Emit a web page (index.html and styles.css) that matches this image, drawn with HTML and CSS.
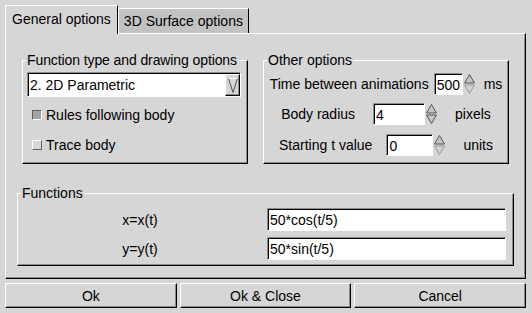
FILE: index.html
```html
<!DOCTYPE html>
<html lang="en">

<head>
    <meta charset="UTF-8">
    <meta name="viewport" content="width=device-width, initial-scale=1.0">
    <title>Options</title>
    <link rel="stylesheet" href="styles.css">
</head>

<body>
    <div class="dialog">
        <!-- Tabs -->
        <div class="tabs">
            <div class="tab tab-active">General options</div>
            <div class="tab">3D Surface options</div>
        </div>

        <!-- Page -->
        <div class="pane">
            <div class="top-row">
                <fieldset class="group group-type">
                    <legend>Function type and drawing options</legend>
                    <div class="combo">
                        <div class="combo-text">2. 2D Parametric</div>
                        <div class="combo-button">
                            <svg width="10" height="17" viewBox="0 0 10 17">
                                <polyline points="0.5,1.5 5,15.5 9.5,1.5" fill="none" stroke="#505050" />
                                <line x1="0.5" y1="1.5" x2="9.5" y2="1.5" stroke="#ffffff" />
                            </svg>
                        </div>
                    </div>
                    <label class="check"><span class="check-box checked"></span>Rules following body</label>
                    <label class="check"><span class="check-box"></span>Trace body</label>
                </fieldset>

                <fieldset class="group group-other">
                    <legend>Other options</legend>
                    <div class="spin-row row-time">
                        <span>Time between animations</span>
                        <span class="spin">
                            <input class="field spin-time" type="text" value="500">
                            <svg class="arrows" width="13" height="22" viewBox="0 0 13 22">
                                <polygon points="6.5,1.5 11.5,10 1.5,10" fill="#c4c4c4" stroke="#555" />
                                <polygon points="1.5,12 11.5,12 6.5,20.5" fill="#d0d0d0" stroke="#9a9a9a" />
                            </svg>
                        </span>
                        <span>ms</span>
                    </div>
                    <div class="spin-row row-radius">
                        <span>Body radius</span>
                        <span class="spin">
                            <input class="field spin-radius" type="text" value="4">
                            <svg class="arrows" width="13" height="22" viewBox="0 0 13 22">
                                <polygon points="6.5,1.5 11.5,10 1.5,10" fill="#c4c4c4" stroke="#555" />
                                <polygon points="1.5,12 11.5,12 6.5,20.5" fill="#c4c4c4" stroke="#555" />
                            </svg>
                        </span>
                        <span>pixels</span>
                    </div>
                    <div class="spin-row row-start">
                        <span>Starting t value</span>
                        <span class="spin">
                            <input class="field spin-start" type="text" value="0">
                            <svg class="arrows" width="13" height="22" viewBox="0 0 13 22">
                                <polygon points="6.5,1.5 11.5,10 1.5,10" fill="#c4c4c4" stroke="#555" />
                                <polygon points="1.5,12 11.5,12 6.5,20.5" fill="#d0d0d0" stroke="#9a9a9a" />
                            </svg>
                        </span>
                        <span>units</span>
                    </div>
                </fieldset>
            </div>

            <fieldset class="group group-functions">
                <legend>Functions</legend>
                <div class="functions">
                    <span class="func-label">x=x(t)</span>
                    <input class="field func-field" type="text" value="50*cos(t/5)">
                    <span class="func-label">y=y(t)</span>
                    <input class="field func-field" type="text" value="50*sin(t/5)">
                </div>
            </fieldset>
        </div>

        <!-- Buttons -->
        <div class="buttons">
            <button class="button">Ok</button>
            <button class="button">Ok &amp; Close</button>
            <button class="button">Cancel</button>
        </div>
    </div>
</body>

</html>
```

FILE: styles.css
```css
/* Base */
body {
    margin: 0;
    background-color: #d6d6d6;
    font-family: "Liberation Sans", Arial, sans-serif;
    font-size: 14px;
    color: #000;
}

.dialog {
    width: 521px;
    padding: 5px 6px 5px 5px;
}

/* Raised 3D edge used by panels, groups and buttons */
.pane,
.group,
.button,
.combo-button {
    border: 1px solid;
    border-color: #ffffff #000000 #000000 #ffffff;
    box-shadow: inset -1px -1px 0 #8c8c8c;
}

/* Sunken edge used by text fields */
.field {
    box-sizing: border-box;
    height: 22px;
    margin: 0;
    padding: 1px 0 0 2px;
    border: 1px solid;
    border-color: #8c8c8c #ffffff #ffffff #8c8c8c;
    box-shadow: inset 1px 1px 0 #000000;
    background-color: #ffffff;
    font: inherit;
    color: #000;
    outline: none;
}

/* Tabs */
.tabs {
    display: flex;
    align-items: flex-end;
    height: 28px;
    position: relative;
    z-index: 1;
}

.tab {
    box-sizing: border-box;
    height: 25px;
    padding: 0 5px;
    line-height: 24px;
    background-color: #c2c2c2;
    border-top: 1px solid #ffffff;
    border-left: 1px solid #ffffff;
    border-right: 1px solid #000000;
}

.tab-active {
    height: 29px;
    margin-bottom: -1px;
    padding: 0 6px;
    line-height: 26px;
    background-color: #d6d6d6;
}

/* Page */
.pane {
    padding: 18px 16px 12px 16px;
}

.top-row {
    display: flex;
    gap: 15px;
}

/* Group boxes */
.group {
    box-sizing: border-box;
    min-width: 0;
    margin: 0;
    padding: 0;
}

.group legend {
    padding: 0 1px;
    margin-left: 3px;
    line-height: 16px;
    white-space: nowrap;
}

.group-type {
    flex: 0 0 226px;
    padding: 4px 6px 8px 4px;
}

.group-type legend {
    margin-left: -1px;
    letter-spacing: -0.1px;
}

.group-other {
    flex: 1;
    padding: 5px 0 7px 0;
}

.group-functions {
    margin: 21px -5px 0 -5px;
    padding: 7px 7px 5px 0;
}

/* Combo box */
.combo {
    display: flex;
    height: 25px;
    box-sizing: border-box;
    padding: 1px 0 0 1px;
    border: 1px solid;
    border-color: #8c8c8c #ffffff #ffffff #8c8c8c;
    box-shadow: inset 1px 1px 0 #000000;
}

.combo-text {
    flex: 1;
    background-color: #ffffff;
    padding-left: 1px;
    line-height: 22px;
}

.combo-button {
    box-sizing: border-box;
    width: 15px;
    display: flex;
    align-items: center;
    justify-content: center;
}

/* Check boxes */
.check {
    display: flex;
    align-items: center;
    gap: 4px;
    height: 20px;
    margin-top: 8px;
    padding-left: 5px;
}

.check + .check {
    margin-top: 10px;
}

.check-box {
    box-sizing: border-box;
    width: 10px;
    height: 10px;
    border: 1px solid;
    border-color: #ffffff #606060 #606060 #ffffff;
}

.check-box.checked {
    border-color: #606060 #ffffff #ffffff #606060;
    background-color: #a4a4a4;
}

/* Spin boxes */
.spin-row {
    display: flex;
    align-items: center;
    justify-content: center;
    height: 22px;
}

.spin-row + .spin-row {
    margin-top: 8px;
}

.spin-row.row-start {
    margin-top: 9px;
}

.spin {
    display: flex;
    align-items: center;
}

.arrows {
    display: block;
}

.row-time .spin {
    margin: 0 8px 0 5px;
}

.row-radius .spin {
    margin: 0 17px 0 18px;
}

.row-start .spin {
    margin: 0 17px 0 14px;
}

.spin-time {
    width: 29px;
}

.spin-radius {
    width: 52px;
}

.spin-start {
    width: 47px;
}

/* Functions */
.functions {
    display: grid;
    grid-template-columns: 244px 1fr;
    column-gap: 5px;
    row-gap: 6px;
    align-items: center;
}

.func-label {
    text-align: center;
}

.func-field {
    height: 23px;
    width: 100%;
}

/* Dialog buttons */
.buttons {
    display: flex;
    gap: 3px;
    margin-top: 4px;
}

.button {
    flex: 1;
    height: 25px;
    margin: 0;
    padding: 0;
    background-color: #d6d6d6;
    font: inherit;
    color: #000;
}
```
